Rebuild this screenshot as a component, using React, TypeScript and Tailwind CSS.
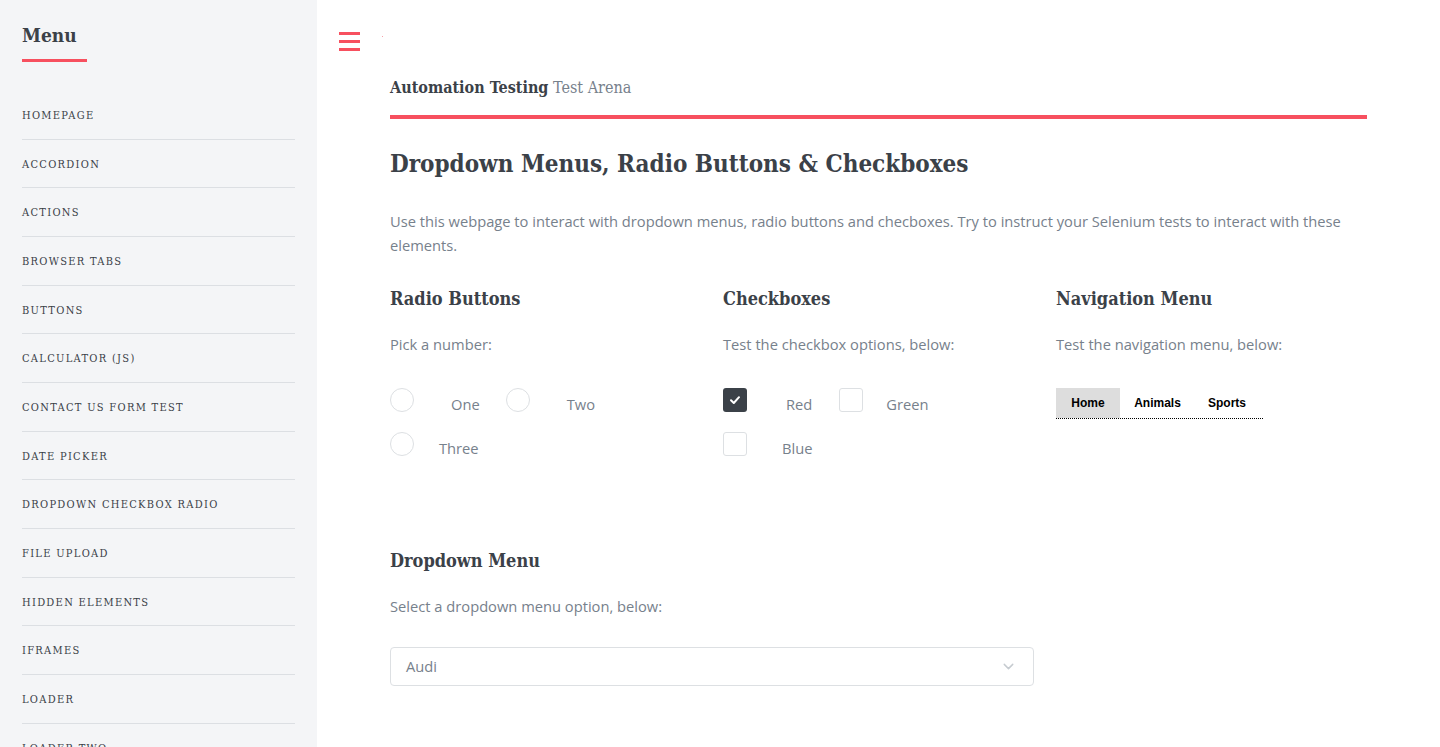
import { ChevronDown } from 'lucide-react';

const slab = { fontFamily: '"DejaVu Serif Condensed", "DejaVu Serif", serif' };
const sans = { fontFamily: '"Open Sans", "Noto Sans", sans-serif' };

const menuItems = [
  'Homepage',
  'Accordion',
  'Actions',
  'Browser Tabs',
  'Buttons',
  'Calculator (JS)',
  'Contact Us Form Test',
  'Date Picker',
  'Dropdown Checkbox Radio',
  'File Upload',
  'Hidden Elements',
  'iFrames',
  'Loader',
  'Loader Two',
];

const Sidebar = () => (
  <div className="w-[317px] shrink-0 h-screen overflow-hidden bg-[#f4f5f7] pl-[22px] pr-[22px]" style={slab}>
    <div className="pt-[23px] text-[19px] font-bold text-[#3b4148] leading-[24px]">Menu</div>
    <div className="mt-[12px] w-[65px] h-[3px] bg-[#f7505f]" />
    <ul className="mt-[29px]">
      {menuItems.map((item) => (
        <li
          key={item}
          className="h-[48.67px] flex items-center pt-[3px] border-b border-[#dcdfe3] text-[11px] uppercase tracking-[1.3px] text-[#3b4148]"
        >
          {item}
        </li>
      ))}
    </ul>
  </div>
);

const Radio = ({ label, gap }: { label: string; gap: string }) => (
  <label className="flex items-center h-[24px]">
    <span className="w-[24px] h-[24px] rounded-full border border-[#dde0e3] bg-white" />
    <span className={`${gap} relative top-[4px] text-[14.7px] text-[#77818c]`}>{label}</span>
  </label>
);

const Checkbox = ({ label, gap, checked }: { label: string; gap: string; checked?: boolean }) => (
  <label className="flex items-center h-[24px]">
    {checked ? (
      <span className="w-[24px] h-[24px] rounded-[3px] bg-[#3b4148] flex items-center justify-center">
        <svg width="12" height="10" viewBox="0 0 12 10">
          <path d="M2 5.2 L4.8 8 L10 2.2" stroke="white" strokeWidth="2" fill="none" strokeLinecap="round" strokeLinejoin="round" />
        </svg>
      </span>
    ) : (
      <span className="w-[24px] h-[24px] rounded-[3px] border border-[#dde0e3] bg-white" />
    )}
    <span className={`${gap} relative top-[4px] text-[14.7px] text-[#77818c]`}>{label}</span>
  </label>
);

const SectionHead = ({ title, sub }: { title: string; sub: string }) => (
  <div>
    <h3 className="text-[18px] font-bold text-[#3b4148] leading-[24px]" style={slab}>{title}</h3>
    <p className="mt-[21px] text-[14.7px] text-[#77818c] leading-[24px]">{sub}</p>
  </div>
);

export default function App() {
  return (
    <div className="flex h-screen bg-white overflow-hidden" style={sans}>
      <Sidebar />
      <div className="flex-1 relative px-[73px]">
        <div className="absolute left-[22px] top-[32px] flex flex-col gap-[5px]">
          <span className="w-[21px] h-[3px] bg-[#f7505f]" />
          <span className="w-[21px] h-[3px] bg-[#f7505f]" />
          <span className="w-[21px] h-[3px] bg-[#f7505f]" />
        </div>
        <span className="absolute left-[65px] top-[36px] w-[1px] h-[1px] bg-[#f7a0a8]" />

        <div className="pt-[77px] text-[16px] leading-[22px]" style={slab}>
          <span className="font-bold text-[#3b4148]">Automation Testing</span>{' '}
          <span className="text-[#77818c]">Test Arena</span>
        </div>
        <div className="mt-[16px] h-[4px] bg-[#f7505f]" />

        <h1 className="mt-[29px] text-[24px] font-bold text-[#3b4148] leading-[32px]" style={slab}>
          Dropdown Menus, Radio Buttons &amp; Checkboxes
        </h1>

        <p className="mt-[29px] text-[14.7px] text-[#77818c] leading-[24px]">
          Use this webpage to interact with dropdown menus, radio buttons and checboxes. Try to instruct your Selenium tests to interact with these elements.
        </p>

        <div className="mt-[30px] grid grid-cols-[333px_333px_1fr]">
          <div>
            <SectionHead title="Radio Buttons" sub="Pick a number:" />
            <div className="mt-[32px] flex flex-col gap-[20px]">
              <div className="flex items-center gap-[26px]">
                <Radio label="One" gap="ml-[37px]" />
                <Radio label="Two" gap="ml-[37px]" />
              </div>
              <Radio label="Three" gap="ml-[25px]" />
            </div>
          </div>
          <div>
            <SectionHead title="Checkboxes" sub="Test the checkbox options, below:" />
            <div className="mt-[32px] flex flex-col gap-[20px]">
              <div className="flex items-center gap-[27px]">
                <Checkbox label="Red" gap="ml-[39px]" checked />
                <Checkbox label="Green" gap="ml-[23px]" />
              </div>
              <Checkbox label="Blue" gap="ml-[35px]" />
            </div>
          </div>
          <div>
            <SectionHead title="Navigation Menu" sub="Test the navigation menu, below:" />
            <div
              className="mt-[32px] w-[207px] flex border-b border-dotted border-black text-[12px] font-bold text-black"
              style={{ fontFamily: '"Liberation Sans", Arial, sans-serif' }}
            >
              <span className="w-[64px] h-[30px] flex items-center justify-center bg-[#dddddd]">Home</span>
              <span className="w-[75px] h-[30px] flex items-center justify-center">Animals</span>
              <span className="w-[68px] h-[30px] flex items-center justify-center pr-[4px]">Sports</span>
            </div>
          </div>
        </div>

        <div className="mt-[93px]">
          <SectionHead title="Dropdown Menu" sub="Select a dropdown menu option, below:" />
          <div className="mt-[29px] w-[644px] h-[39px] border border-[#dde0e3] rounded-[4px] flex items-center justify-between pl-[15px] pr-[16px]">
            <span className="text-[14.7px] text-[#77818c]">Audi</span>
            <ChevronDown className="w-[17px] h-[17px] text-[#c6cbd0]" strokeWidth={2} />
          </div>
        </div>
      </div>
    </div>
  );
}
